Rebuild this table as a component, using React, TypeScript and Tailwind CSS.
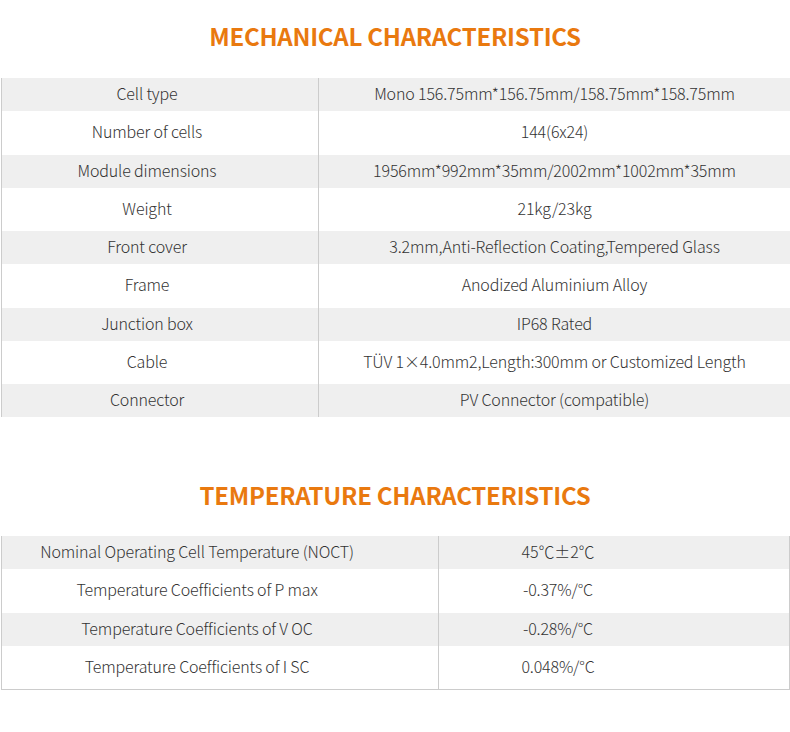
import React from 'react';

const mechanical = [
  ['Cell type', 'Mono 156.75mm*156.75mm/158.75mm*158.75mm'],
  ['Number of cells', '144(6x24)'],
  ['Module dimensions', '1956mm*992mm*35mm/2002mm*1002mm*35mm'],
  ['Weight', '21kg/23kg'],
  ['Front cover', '3.2mm,Anti-Reflection Coating,Tempered Glass'],
  ['Frame', 'Anodized Aluminium Alloy'],
  ['Junction box', 'IP68 Rated'],
  ['Cable', 'TÜV 1×4.0mm2,Length:300mm or Customized Length'],
  ['Connector', 'PV Connector (compatible)'],
];

const temperature = [
  ['Nominal Operating Cell Temperature (NOCT)', '45℃±2℃'],
  ['Temperature Coefficients of P max', '-0.37%/°C'],
  ['Temperature Coefficients of V OC', '-0.28%/°C'],
  ['Temperature Coefficients of I SC', '0.048%/°C'],
];

const Heading: React.FC<{ children: React.ReactNode }> = ({ children }) => (
  <h2 className="text-center text-[24px] h-[24px] font-bold leading-none tracking-[-0.25px] text-[#e9790f]">
    {children}
  </h2>
);

export default function App() {
  return (
    <div
      className="w-[790px] h-[732px] bg-white text-[#333] overflow-hidden"
      style={{ fontFamily: '"Noto Sans CJK SC", "Noto Sans", sans-serif' }}
    >
      <div className="pt-[24px]">
        <Heading>MECHANICAL CHARACTERISTICS</Heading>
      </div>

      {/* mechanical table */}
      <div className="mt-[30px] ml-px border-l border-[#ccc]">
        {mechanical.map(([label, value], i) => (
          <div
            key={label}
            className={`flex text-[16px] font-light tracking-[-0.15px] ${i % 2 === 0 ? 'h-[33px] bg-[#efefef]' : 'h-[43.5px] bg-white'}`}
          >
            <div className="w-[317px] flex items-center justify-center pr-[26px] pb-[3px] border-r border-[#ccc]">
              {label}
            </div>
            <div className="flex-1 flex items-center justify-center pb-[3px]">{value}</div>
          </div>
        ))}
      </div>

      <div className="pt-[66px]">
        <Heading>TEMPERATURE CHARACTERISTICS</Heading>
      </div>

      {/* temperature table */}
      <div className="mt-[29px] ml-px w-[789px] border-l border-r border-b border-[#ccc]">
        {temperature.map(([label, value], i) => (
          <div
            key={label}
            className={`flex text-[16px] font-light tracking-[-0.15px] ${i % 2 === 0 ? 'h-[33px] bg-[#efefef]' : 'h-[43.5px] bg-white'}`}
          >
            <div className="w-[437px] flex items-center justify-center pr-[46px] pb-[3px] border-r border-[#ccc]">
              {label}
            </div>
            <div className="flex-1 flex items-center justify-center pr-[112px] pb-[3px]">{value}</div>
          </div>
        ))}
      </div>
    </div>
  );
}
